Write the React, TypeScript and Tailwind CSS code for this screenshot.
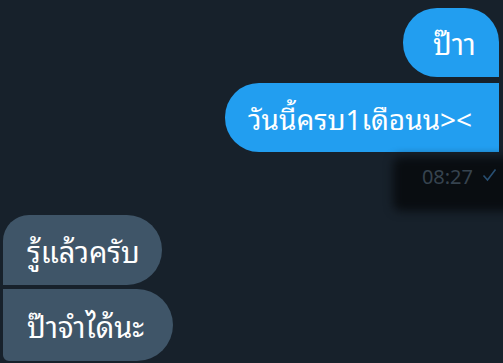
import React from "react";

export default function App() {
  return (
    <div
      className="relative w-[503px] h-[363px] overflow-hidden bg-[#17212b] text-white"
      style={{ fontFamily: '"Noto Sans Thai Looped", "Noto Sans Thai UI", Loma, Garuda, Waree, "Noto Sans", sans-serif' }}
    >
      <div className="flex flex-col pt-[8px] pr-[4px] pl-[3px]">
        <div className="flex justify-end">
          <div className="w-[96px] h-[69px] bg-[#229ef0] rounded-l-[34px] rounded-tr-[34px] flex items-center pl-[30px] text-[29px] leading-none">
            ป๊าา
          </div>
        </div>
        <div className="flex justify-end mt-[6px]">
          <div className="w-[274px] h-[69px] bg-[#229ef0] rounded-l-[34px] flex items-center pl-[23px] text-[28px] leading-none">
            วันนี้ครบ1เดือนน&gt;&lt;
          </div>
        </div>
        <div className="relative flex justify-end items-center h-[46px] pr-[2px]">
          <div className="absolute left-[390px] top-[5px] w-[140px] h-[54px] bg-[#090d11] blur-[5px] rounded-[8px]" />
          <span className="relative text-[20px] text-[#36434f] mr-[9px]">08:27</span>
          <svg className="relative" width="15" height="14" viewBox="0 0 15 14">
            <path d="M1.5 7.5 L5.5 12 L13.5 1.5" stroke="#284f72" strokeWidth="1.6" fill="none" />
          </svg>
        </div>
        <div className="flex flex-col items-start mt-[17px] gap-[4px]">
          <div className="w-[159px] h-[70px] bg-[#3f5568] rounded-tl-[26px] rounded-r-[35px] flex items-center pl-[24px] text-[29px] leading-none">
            รู้แล้วครับ
          </div>
          <div className="w-[170px] h-[72px] bg-[#3f5568] rounded-r-[36px] rounded-bl-[6px] flex items-center pl-[24px] text-[29px] leading-none">
            ป๊าจำได้นะ
          </div>
        </div>
      </div>
    </div>
  );
}
